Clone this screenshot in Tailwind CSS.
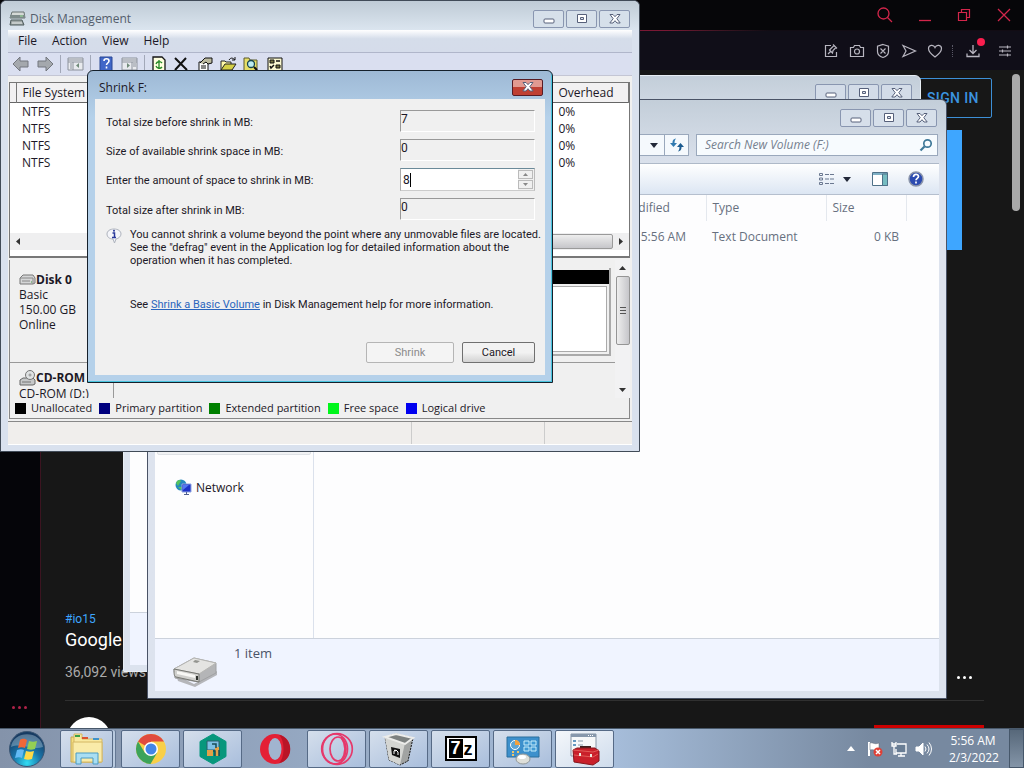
<!DOCTYPE html>
<html lang="en">
<head>
<meta charset="utf-8">
<title>Desktop</title>
<script src="https://cdn.jsdelivr.net/npm/@tailwindcss/browser@4"></script>
</head>
<body class="relative flex h-screen flex-col overflow-hidden bg-[#171717] font-['Open_Sans','Noto_Sans',sans-serif] text-xs text-[#1c1826]">
<svg class="hidden">
  <symbol id="min" viewBox="0 0 14 12"><rect x="2" y="6" width="10" height="4" rx="1" fill="#fff" stroke="#56607a"/></symbol>
  <symbol id="max" viewBox="0 0 14 12"><path d="M2.500 1.500h9v8h-9z" fill="#fff" stroke="#56607a"/><path d="M5.500 4.500h3v2h-3z" fill="#dde4ee" stroke="#56607a"/></symbol>
  <symbol id="cls" viewBox="0 0 14 12"><path d="M2 1.500h3l2 2.200 2-2.200h3L8.800 5.700l3.400 4.300H9L7 7.700 5 10H1.800l3.400-4.300z" fill="#fff" stroke="#56607a"/></symbol>
</svg>

<!-- Browser -->
<header class="flex h-[30px] shrink-0 items-center justify-end bg-[#060609] text-[#d3264b]">
  <button aria-label="Search" class="mr-6"><svg width="18" height="18" viewBox="0 0 18 18" fill="none" stroke="currentColor" stroke-width="1.300"><circle cx="7.500" cy="7.500" r="5.500"/><path d="M11.500 11.500L16 16"/></svg></button>
  <button aria-label="Minimize" class="mr-6"><svg width="14" height="18" viewBox="0 0 14 18" stroke="currentColor" stroke-width="1.300"><path d="M1 14.500h12"/></svg></button>
  <button aria-label="Restore" class="mr-6"><svg width="16" height="16" viewBox="0 0 16 16" fill="none" stroke="currentColor" stroke-width="1.200"><path d="M2.500 5.500h8v8h-8zM5.500 5.500v-3h8v8h-3"/></svg></button>
  <button aria-label="Close" class="mr-3"><svg width="16" height="16" viewBox="0 0 16 16" stroke="currentColor" stroke-width="1.300"><path d="M2 2l12 12M14 2L2 14"/></svg></button>
</header>
<div class="h-px shrink-0 bg-linear-to-r from-[#7a1834] from-65% to-[#120c14] to-75%"></div>
<div class="flex h-[39px] shrink-0 items-center justify-end gap-2 bg-[#100e18] pr-[11px] text-[#b8b6c0]">
  <button aria-label="Pin"><svg width="18" height="18" viewBox="0 0 18 18" fill="none" stroke="currentColor" stroke-width="1.200"><path d="M9 3.500H3.500v11h11V10M6 12l3-3M7.500 8l3 3 .5-2.500 3-3-2-2-3 3zM11 2.500l4 4"/></svg></button>
  <button aria-label="Snapshot"><svg width="18" height="18" viewBox="0 0 18 18" fill="none" stroke="currentColor" stroke-width="1.200"><path d="M2.500 5.500h3l1-2h5l1 2h3v9h-13z"/><circle cx="9" cy="9.500" r="2.500"/></svg></button>
  <button aria-label="Ad blocker"><svg width="18" height="18" viewBox="0 0 18 18" fill="none" stroke="currentColor" stroke-width="1.200"><path d="M9 2.500l5.500 1.800v5.200c0 3-2.500 5-5.500 6-3-1-5.500-3-5.500-6V4.300zM6.500 6.500l5 5M11.500 6.500l-5 5"/></svg></button>
  <button aria-label="Send"><svg width="18" height="18" viewBox="0 0 18 18" fill="none" stroke="currentColor" stroke-width="1.200"><path d="M3 3.500L15.500 9 3 14.500 6 9z"/></svg></button>
  <button aria-label="Favourite"><svg width="18" height="18" viewBox="0 0 18 18" fill="none" stroke="currentColor" stroke-width="1.200"><path d="M9 15C5 12 2.500 9.500 2.500 6.500c0-3.500 5-4.500 6.500-1 1.500-3.500 6.500-2.500 6.500 1C15.500 9.500 13 12 9 15z"/></svg></button>
  <span class="h-3 border-l border-dotted border-[#5a5866]"></span>
  <button aria-label="Downloads" class="relative ml-0.5"><svg width="20" height="18" viewBox="0 0 20 18" fill="none" stroke="currentColor" stroke-width="1.300"><path d="M10 3v8.500M6.500 8l3.500 3.500L13.500 8M4 11.500v3h12v-3"/></svg><span class="absolute -top-1 -right-0.5 size-2 rounded-full bg-[#fa1e4e]"></span></button>
  <button aria-label="Easy setup" class="ml-1.5"><svg width="16" height="18" viewBox="0 0 16 18" fill="none" stroke="currentColor" stroke-width="1.200"><path d="M2 5h12M2 9h12M2 13h12M10.500 3.500v3M5.500 7.500v3M10.500 11.500v3"/></svg></button>
</div>
<main class="flex min-h-0 flex-1 font-[Roboto,sans-serif]">
  <nav class="flex w-[41px] flex-col justify-end border-r border-[#3c1420] bg-[#050509] pb-[19px] pl-3">
    <button aria-label="More" class="flex gap-[3px]"><i class="size-[3px] rounded-full bg-[#b0234a]"></i><i class="size-[3px] rounded-full bg-[#b0234a]"></i><i class="size-[3px] rounded-full bg-[#b0234a]"></i></button>
  </nav>
  <div class="flex min-w-0 flex-1 flex-col overflow-hidden pl-6">
    <div class="flex h-[60px] shrink-0 justify-end pt-2 pr-5"><a href="#" class="flex h-10 w-[76px] items-center rounded-xs border border-[#3d8fd6] pl-2.5 text-sm font-medium tracking-wide text-[#3b94e0]">SIGN IN</a></div>
    <div class="mr-[50px] h-[120px] shrink-0 bg-[#3ea6ff]"></div>
    <div class="flex-1"></div>
    <section class="h-[118px] shrink-0 pr-7">
      <a href="#" class="block text-xs leading-[18px] text-[#3ea6ff]">#io15</a>
      <h1 class="text-lg leading-6 text-white">Google I/O 2015</h1>
      <div class="mt-1 flex h-11 items-center justify-between pr-3 text-sm text-[#aaa]"><span class="pb-3">36,092 views</span><button aria-label="More actions" class="flex gap-[3px] pb-0.5"><i class="size-[3px] rounded-full bg-white"></i><i class="size-[3px] rounded-full bg-white"></i><i class="size-[3px] rounded-full bg-white"></i></button></div>
      <div class="flex justify-between border-t border-[#303030] pt-4"><span class="ml-0.5 size-11 shrink-0 rounded-full bg-white"></span><strong class="ml-2 flex-1 pt-2 text-sm font-medium text-white">Google Developers</strong><button aria-label="Subscribe" class="mt-2 h-9 w-[110px] bg-[#c00]"></button></div>
    </section>
  </div>
  <div class="w-3 pt-1"><div class="h-[137px] w-2 rounded-full bg-[#a9a9a9]"></div></div>
</main>

<!-- Explorer, rear -->
<section class="absolute top-[75px] left-[123px] flex h-[597px] w-[798px] flex-col rounded-t-md border border-[#e8eef4] bg-linear-to-b from-[#c3ced9] to-[#dce3ee] to-10% p-1.5">
  <div class="flex justify-end gap-0.5 pr-0.5">
    <button aria-label="Minimize" class="mt-0.5 flex h-[18px] w-[31px] items-center justify-center rounded-xs border border-[#8996b0] bg-[#d3dce8]"><svg width="14" height="12"><use href="#min"/></svg></button>
    <button aria-label="Maximize" class="mt-0.5 flex h-[18px] w-[31px] items-center justify-center rounded-xs border border-[#8996b0] bg-[#d3dce8]"><svg width="14" height="12"><use href="#max"/></svg></button>
    <button aria-label="Close" class="mt-0.5 flex h-[18px] w-[31px] items-center justify-center rounded-xs border border-[#8996b0] bg-[#d3dce8]"><svg width="14" height="12"><use href="#cls"/></svg></button>
  </div>
  <div class="mt-2 flex-1 bg-[#fdfdfe]"></div>
  <div class="h-[53px] border-t border-[#ccd2dc] bg-[#f0f4ff]"></div>
</section>

<!-- Explorer, front -->
<section class="absolute top-[99px] left-[147px] flex h-[600px] w-[800px] flex-col rounded-t-md border border-[#4a5366] bg-linear-to-b from-[#c3ced9] to-[#dde3ee] to-12% px-[7px] pb-[7px]">
  <div class="flex justify-end gap-0.5 pt-[9px] pr-0.5">
    <button aria-label="Minimize" class="flex h-[18px] w-[31px] items-center justify-center rounded-xs border border-[#8996b0] bg-[#d6dfea]"><svg width="14" height="12"><use href="#min"/></svg></button>
    <button aria-label="Maximize" class="flex h-[18px] w-[31px] items-center justify-center rounded-xs border border-[#8996b0] bg-[#d6dfea]"><svg width="14" height="12"><use href="#max"/></svg></button>
    <button aria-label="Close" class="flex h-[18px] w-[31px] items-center justify-center rounded-xs border border-[#8996b0] bg-[#d6dfea]"><svg width="14" height="12"><use href="#cls"/></svg></button>
  </div>
  <div class="mt-[7px] flex h-[22px] gap-[7px] pr-px">
    <div class="flex flex-1 justify-end border border-[#9aa8bc] bg-[#f5f9fd]">
      <button aria-label="Previous locations" class="flex w-5 items-center justify-center"><svg width="8" height="5"><path d="M0 0h8L4 5z" fill="#222838"/></svg></button>
      <button aria-label="Refresh" class="flex w-6 items-center justify-center border-l border-[#9aa8bc]"><svg width="16" height="16" viewBox="0 0 16 16"><path d="M7 1.500C4 2 3.500 4 3.500 6H1l3.500 4L8 6H5.500c0-2 .5-3 1.500-4.500z" fill="#317ab0"/><path d="M9 14.500c3-.5 3.500-2.500 3.500-4.500H15l-3.500-4L8 10h2.500c0 2-.5 3-1.500 4.500z" fill="#1b5b90"/></svg></button>
    </div>
    <label class="flex w-[242px] items-center border border-[#9aa8bc] bg-[#f7fbfe] pr-1 pl-2">
      <input aria-label="Search New Volume (F:)" placeholder="Search New Volume (F:)" class="min-w-0 flex-1 text-xs italic outline-none placeholder:text-[#75808e]">
      <svg width="14" height="14" viewBox="0 0 14 14" fill="none" stroke="#3e7898"><circle cx="8.500" cy="5.500" r="3.700" stroke-width="1.700"/><path d="M5.500 8.500L1.500 12.500" stroke-width="2.200"/></svg>
    </label>
  </div>
  <div class="mt-[7px] flex h-8 items-center justify-end border-y border-b-[#b5bfce] border-t-[#aeb9c8] bg-linear-to-b from-white to-[#dce6f3] pr-[15px]">
    <button aria-label="View" class="mr-2"><svg width="16" height="14" viewBox="0 0 16 14" fill="none" stroke="#6b7890"><path d="M.5 1.500h3v2h-3zM.5 6h3v2h-3zM.5 10.500h3v2h-3z"/><path d="M6 2.500h10M6 7h10M6 11.500h10" stroke-dasharray="4 1"/></svg></button>
    <button aria-label="View options" class="mr-[21px]"><svg width="8" height="5"><path d="M0 0h8L4 5z" fill="#222838"/></svg></button>
    <button aria-label="Preview pane" class="mr-5"><svg width="16" height="14" viewBox="0 0 16 14"><path d="M.5.5h15v13H.5z" fill="#fff" stroke="#4e7188"/><path d="M1 1h14v2H1z" fill="#7eb0c5"/><path d="M10.500 2h5v11.500h-5z" fill="#75bcc1" stroke="#4e7188"/></svg></button>
    <button aria-label="Help"><svg width="16" height="16" viewBox="0 0 16 16"><circle cx="8" cy="8" r="7" fill="#2c4bb0" stroke="#8a94aa" stroke-width="1.500"/><path d="M5.500 6c0-3.500 5-3.500 5-.5 0 2-2.500 1.800-2.500 3.800M8 10.500v2" stroke="#fff" stroke-width="1.700" fill="none"/></svg></button>
  </div>
  <div class="flex min-h-0 flex-1 bg-[#fdfdfe]">
    <aside class="flex w-[159px] shrink-0 flex-col border-r border-[#dbe1ec]">
      <div class="flex h-[260px] items-end px-0.5"><a href="#" class="w-full rounded-xs border border-[#dfe2e6] bg-[#f1f2f4] pl-11">New Volume (F:)</a></div>
      <a href="#" class="mt-6 ml-5 flex items-center gap-1"><svg width="17" height="17" viewBox="0 0 17 17"><circle cx="6" cy="6" r="5.500" fill="#2689be"/><path d="M1 4c2-4 4-3 5-2L3 7zM3 8l4 0-1 3z" fill="#56c35c"/><path d="M7 5h9v8H7z" fill="#1e33c8" stroke="#8fa4e0"/><path d="M8 6h6l-6 5z" fill="#5377f2"/><path d="M11.500 13v2M9 15.500h5" stroke="#506090"/></svg>Network</a>
    </aside>
    <table class="h-max w-full table-fixed text-left text-[#67707f]">
      <thead><tr class="h-[26px] align-middle"><th class="border-r border-[#e4e8ee] pl-1 font-normal">Name</th><th class="w-[132px] border-r border-[#e4e8ee] pl-4 font-normal">Date modified</th><th class="w-[120px] border-r border-[#e4e8ee] pl-1.5 font-normal">Type</th><th class="w-20 border-r border-[#e4e8ee] pl-1.5 font-normal">Size</th><th class="w-[33px]"></th></tr></thead>
      <tbody><tr class="h-8"><td class="pl-1">New Text Document</td><td class="pr-5 text-right whitespace-nowrap">2/3/2022 5:56 AM</td><td class="pl-1.5">Text Document</td><td class="pr-[7px] text-right">0 KB</td><td></td></tr></tbody>
    </table>
  </div>
  <footer class="flex h-[53px] border-t border-[#ccd2dc] bg-[#f0f4ff] pl-[17px]">
    <svg class="mt-4 mr-4" width="46" height="32" viewBox="0 0 46 32"><path d="M4 20l18 9 23-13v4L23 32 6 26z" fill="#b5b6ba"/><path d="M2 14L22 3l22 5v10L27 27 3 23z" fill="#b4b5b7" stroke="#a0a1a3"/><path d="M2 14L22 3l22 5-17 11z" fill="#e4e4e2" stroke="#b6b6b3"/><path d="M2 14l25 5v8L4 22c-2-1-2-3-2-8z" fill="#d0d0cd" stroke="#777873"/><path d="M5 16l18 4v3L5 19z" fill="#f8f8f5"/><path d="M23 5l5 1-3 2-4-1z" fill="#949590"/><path d="M25 21v4" stroke="#2d302b" stroke-width="2"/></svg>
    <span class="pt-1.5 text-[13px] text-[#4b5368]">1 item</span>
  </footer>
</section>

<!-- Disk Management -->
<section class="absolute top-0 left-0 flex h-[452px] w-[640px] flex-col rounded-t-md border border-[#414b58] bg-[#d9e1ee] px-[7px] pb-[6px]">
  <div class="-mx-[7px] flex h-[29px] shrink-0 items-center rounded-t-md bg-linear-to-b from-[#bfcbd6] to-[#dbe5ef] pt-1.5 pr-[9px] pl-2 text-[#545e6c]">
    <svg width="17" height="16" viewBox="0 0 17 16"><path d="M3 1h12l1 6H1z" fill="#d5d9d7" stroke="#687373"/><path d="M1 4h15v3H1z" fill="#7e8b8b"/><path d="M2 9h11l2 5H1z" fill="#a0a8a7" stroke="#4f5c5c"/><path d="M3 12h10" stroke="#e8eceb"/><path d="M11 5h3" stroke="#9ce59a"/></svg>
    <h2 class="ml-1 flex-1">Disk Management</h2>
    <div class="flex gap-0.5">
      <button aria-label="Minimize" class="flex h-[18px] w-[31px] items-center justify-center rounded-xs border border-[#8996b0] bg-[#d6e0ea]"><svg width="14" height="12"><use href="#min"/></svg></button>
      <button aria-label="Maximize" class="flex h-[18px] w-[31px] items-center justify-center rounded-xs border border-[#8996b0] bg-[#d6e0ea]"><svg width="14" height="12"><use href="#max"/></svg></button>
      <button aria-label="Close" class="flex h-[18px] w-[31px] items-center justify-center rounded-xs border border-[#8996b0] bg-[#d6e0ea]"><svg width="14" height="12"><use href="#cls"/></svg></button>
    </div>
  </div>
  <div class="flex h-[23px] shrink-0 items-center gap-[15px] border-b border-[#b0b6ca] bg-linear-to-b from-white via-[#d5ddea] via-40% to-[#d5dcea] pl-2.5"><button>File</button><button>Action</button><button>View</button><button>Help</button></div>
  <div class="flex h-[23px] shrink-0 items-center border-b border-[#c4c6d4] bg-[#dadff0] pl-1">
    <button aria-label="Back"><svg width="18" height="16" viewBox="0 0 18 16"><path d="M1 8l7-7v4h8v6H8v4z" fill="#a4a8ad" stroke="#73777e"/></svg></button>
    <button aria-label="Forward" class="ml-1.5"><svg width="18" height="16" viewBox="0 0 18 16"><path d="M17 8l-7-7v4H2v6h8v4z" fill="#a4a8ad" stroke="#73777e"/></svg></button>
    <span class="mx-1.5 h-[18px] w-px bg-[#a2a8b8]"></span>
    <button aria-label="Show console tree"><svg width="17" height="16" viewBox="0 0 17 16"><path d="M1 2h15v12H1z" fill="#e8eaee" stroke="#8c929c"/><path d="M1 4h15M1 6h15M6 6v8M3 8h2M3 10h2M3 12h2" stroke="#8c929c"/><path d="M12 7v5L9 9.500z" fill="#6f8a78"/></svg></button>
    <span class="mx-1.5 h-[18px] w-px bg-[#a2a8b8]"></span>
    <button aria-label="Help" class="ml-0.5"><svg width="14" height="16" viewBox="0 0 14 16"><path d="M1 1h12v15H1z" fill="#4167c8" stroke="#294695"/><path d="M5 5c0-3 5-3 5 0 0 2-2.500 2-2.500 4M7.500 10.500v2" stroke="#fff" stroke-width="1.600" fill="none"/></svg></button>
    <button aria-label="Show action pane" class="ml-2"><svg width="17" height="16" viewBox="0 0 17 16"><path d="M1 2h15v12H1z" fill="#e8eaee" stroke="#8c929c"/><path d="M1 4h15M1 6h15M11 6v8M12 8h3M12 10h3" stroke="#8c929c"/><path d="M6 7v5l3-2.500z" fill="#6f8a78"/></svg></button>
    <span class="mx-1.5 h-[18px] w-px bg-[#a2a8b8]"></span>
    <button aria-label="Refresh"><svg width="16" height="16" viewBox="0 0 16 16"><path d="M2 1h9l3 3v12H2z" fill="#ffffe0" stroke="#151515" stroke-width="1.300"/><path d="M11 7a3.500 3.500 0 00-6 1M5 10a3.500 3.500 0 006 1M8 4v4M8 8v5" stroke="#238824" stroke-width="1.300" fill="none"/></svg></button>
    <button aria-label="Delete" class="ml-1.5"><svg width="16" height="16" viewBox="0 0 16 16"><path d="M2 2l12 12M13 2L2 14" stroke="#111" stroke-width="2"/></svg></button>
    <button aria-label="Properties" class="ml-2"><svg width="17" height="16" viewBox="0 0 17 16"><path d="M2 6h9v9H2z" fill="#fff" stroke="#111"/><path d="M3 7l5-5h7v5l-4 1-2-2-3 2" fill="#bdbba0" stroke="#111"/><path d="M4 10h5M4 12h5" stroke="#111"/></svg></button>
    <button aria-label="Open" class="ml-1.5"><svg width="17" height="16" viewBox="0 0 17 16"><path d="M1 14V5h4l1 1h5v3" fill="#fff9aa" stroke="#222"/><path d="M1 14l4-6h11l-4 6z" fill="#d4cf47" stroke="#222"/><path d="M9 4c2-3 4-2 6 0m0-3v3h-3" fill="none" stroke="#111"/></svg></button>
    <button aria-label="Explore" class="ml-1.5"><svg width="16" height="16" viewBox="0 0 16 16"><path d="M1 2h5l1 2h7v11H1z" fill="#e7df66" stroke="#5b592d"/><circle cx="8" cy="8" r="3.500" fill="#bcecf1" stroke="#17454c" stroke-width="1.300"/><path d="M11 11l3 3" stroke="#111" stroke-width="2"/></svg></button>
    <button aria-label="Settings" class="ml-2"><svg width="16" height="16" viewBox="0 0 16 16"><path d="M1 2h14v13H1z" fill="#faf8d0" stroke="#111"/><path d="M3 4h4v3H3zM9 9h4v3H9z" fill="#747443" stroke="#111"/><path d="M9 5h4M3 10l1 2 3-3" fill="none" stroke="#111" stroke-width="1.500"/></svg></button>
  </div>
  <div class="flex min-h-0 flex-1 flex-col border-b border-[#888] bg-[#f0f0f0] pt-1.5 pr-0.5 pl-px">
    <div class="flex h-[176px] shrink-0 flex-col border-x border-t border-b-2 border-[#777] bg-white">
      <table class="w-full table-fixed text-left leading-[17px]">
        <thead><tr class="h-[19px] border-b border-[#666] bg-[#f2f1f2]"><th class="w-1.5 border-r border-[#777]"></th><th class="pl-1.5 font-normal">File System</th><th class="w-[76px] border-r border-[#777] pl-1.5 font-normal">Overhead</th></tr></thead>
        <tbody><tr><td></td><td class="pl-1.5">NTFS</td><td class="pl-1.5">0%</td></tr><tr><td></td><td class="pl-1.5">NTFS</td><td class="pl-1.5">0%</td></tr><tr><td></td><td class="pl-1.5">NTFS</td><td class="pl-1.5">0%</td></tr><tr><td></td><td class="pl-1.5">NTFS</td><td class="pl-1.5">0%</td></tr></tbody>
      </table>
      <div class="mt-auto mb-1.5 flex h-[17px] items-center bg-[#efeff0] px-1.5">
        <svg width="4" height="7"><path d="M4 0v7L0 3.500z" fill="#333"/></svg>
        <div class="mr-1.5 ml-40 h-[15px] flex-1 rounded-xs border border-[#9a9a9a] bg-linear-to-b from-[#eee] to-[#c6c6ca]"></div>
        <svg width="4" height="7"><path d="M0 0v7l4-3.500z" fill="#333"/></svg>
      </div>
    </div>
    <div class="mt-0.5 flex min-h-0 flex-1 border-l border-[#888]">
      <div class="flex min-w-0 flex-1 flex-col">
        <div class="flex h-[103px] shrink-0 border-b border-[#999] leading-[15px]">
          <div class="w-[103px] shrink-0 pt-3 pl-[9px]"><b class="flex items-center"><svg width="17" height="12" viewBox="0 0 17 12"><path d="M1 4l3-3h10l2 3v5l-2 1H1z" fill="#d5d6d7" stroke="#777"/><path d="M1 4h13v6M3 7h8" fill="none" stroke="#888"/><path d="M12 8h1" stroke="#43a343"/></svg>Disk 0</b>Basic<br>150.00 GB<br>Online</div>
          <div class="mt-2 mr-1 mb-1.5 flex flex-1 flex-col border-r-2 border-b-2 border-[#aaa]"><div class="mt-0.5 h-3.5 bg-black"></div><div class="mt-0.5 mr-0.5 mb-0.5 flex-1 border border-[#aaa] bg-white"></div></div>
        </div>
        <div class="flex min-h-0 flex-1 overflow-hidden pt-1.5 leading-[15px]">
          <div class="w-[104px] shrink-0 border-r border-[#999] pl-[9px] whitespace-nowrap"><b class="flex h-[17px] items-center"><svg class="shrink-0" width="17" height="16" viewBox="0 0 17 16"><path d="M1 10l3-2h10l2 2v4l-2 1H1z" fill="#c5c7c8" stroke="#666"/><circle cx="11" cy="5" r="4.500" fill="#dfe2e3" stroke="#777"/><circle cx="11" cy="5" r="1" fill="#fff" stroke="#888"/><path d="M3 12h9" stroke="#777"/></svg>CD-ROM 0</b>CD-ROM (D:)</div>
        </div>
      </div>
      <div class="flex w-[15px] flex-col items-center bg-[#f2f2f3] pt-1.5 pb-1.5">
        <svg width="7" height="4"><path d="M0 4h7L3.500 0z" fill="#333"/></svg>
        <div class="mt-1.5 flex h-[69px] w-3.5 flex-col items-center justify-center gap-0.5 rounded-xs border border-[#959595] bg-linear-to-r from-[#eee] to-[#c6c6ca]"><i class="h-px w-1.5 bg-[#555]"></i><i class="h-px w-1.5 bg-[#555]"></i><i class="h-px w-1.5 bg-[#555]"></i></div>
        <svg class="mt-auto" width="7" height="4"><path d="M0 0h7L3.500 4z" fill="#333"/></svg>
      </div>
    </div>
    <div class="flex h-[21px] shrink-0 items-center gap-[5px] border-x border-b border-[#888] pt-px pl-[5px] text-[11px]">
      <i class="size-[11px] bg-black"></i><span class="mr-0.5">Unallocated</span>
      <i class="size-[11px] bg-[#00007e]"></i><span class="mr-0.5">Primary partition</span>
      <i class="size-[11px] bg-[#008000]"></i><span class="mr-0.5">Extended partition</span>
      <i class="size-[11px] bg-[#00f61b]"></i><span class="mr-0.5">Free space</span>
      <i class="size-[11px] bg-[#0000f0]"></i><span>Logical drive</span>
    </div>
    <div class="h-0.5 shrink-0"></div>
  </div>
  <div class="flex h-[23px] shrink-0 border-b border-white bg-[#f0eeec]"><span class="flex-1 border-r border-[#ccc]"></span><span class="w-[133px] border-r border-[#ccc]"></span><span class="w-[87px]"></span></div>
</section>

<!-- Shrink dialog -->
<section role="dialog" aria-labelledby="dlg" class="absolute top-[70px] left-[87px] flex h-[313px] w-[466px] flex-col rounded-t-md border border-[#15202b] bg-linear-to-b from-[#9eb9d5] to-[#b5d1ea] to-15% px-[7px] pb-[7px] shadow-[inset_-1px_-1px_0_#48c4de]">
  <div class="flex h-7 shrink-0 items-center justify-between pt-1"><h2 id="dlg" class="pt-0.5 pl-1">Shrink F:</h2>
    <button aria-label="Close" class="mr-0.5 flex h-[17px] w-[31px] items-center justify-center rounded-xs border border-[#581c25] bg-linear-to-b from-[#e19a91] from-45% to-[#bf4033] to-50%"><svg width="14" height="12"><use href="#cls"/></svg></button></div>
  <form class="flex flex-1 flex-col bg-[#f0f0f0] pt-[11px] pr-[10px] pl-[11px] font-[Roboto,'Liberation_Sans',sans-serif] text-[11px] leading-[13px]">
    <div class="grid grid-cols-[1fr_135px] gap-y-[7px]">
      <label for="a" class="pt-[6px]">Total size before shrink in MB:</label><input id="a" value="7" readonly class="h-[22px] border border-t-[#999] border-r-white border-b-white border-l-[#999] pb-1 text-xs">
      <label for="b" class="pt-[6px]">Size of available shrink space in MB:</label><input id="b" value="0" readonly class="h-[22px] border border-t-[#999] border-r-white border-b-white border-l-[#999] pb-1 text-xs">
      <label for="c" class="pt-[6px]">Enter the amount of space to shrink in MB:</label>
      <div class="flex h-[23px] border border-t-[#6b8a99] border-r-[#bbb] border-b-[#ccc] border-l-[#aaa] bg-white"><div class="flex min-w-0 flex-1 items-center pl-0.5"><input id="c" value="8" class="w-[7px] text-xs outline-none"><i class="h-3.5 w-px bg-black"></i></div>
        <div class="flex w-4 flex-col justify-between bg-[#f0f0f0] py-px pr-px"><button type="button" aria-label="Increase" class="flex h-[9px] items-center justify-center border border-[#bbb]"><svg width="5" height="3"><path d="M0 3h5L2.500 0z" fill="#888"/></svg></button><button type="button" aria-label="Decrease" class="flex h-[9px] items-center justify-center border border-[#bbb]"><svg width="5" height="3"><path d="M0 0h5L2.500 3z" fill="#888"/></svg></button></div></div>
      <label for="d" class="pt-[6px]">Total size after shrink in MB:</label><input id="d" value="0" readonly class="h-[22px] border border-t-[#999] border-r-white border-b-white border-l-[#999] pb-1 text-xs">
    </div>
    <div class="mt-2 flex"><svg class="mr-2 shrink-0" width="16" height="16" viewBox="0 0 16 16"><path d="M8 1c4 0 7 2 7 5 0 2.500-2.500 4.500-5 5l-1.500 4L7 11C3.500 11 1 9 1 6s3-5 7-5z" fill="#f4f5fa" stroke="#aeb3bd"/><path d="M6.500 5h2v4M6 9.500h4" fill="none" stroke="#29399b" stroke-width="1.500"/><circle cx="8" cy="2.800" r="1" fill="#29399b"/></svg>
      <p class="whitespace-nowrap">You cannot shrink a volume beyond the point where any unmovable files are located.<br>See the "defrag" event in the Application log for detailed information about the<br>operation when it has completed.</p></div>
    <p class="mt-[31px] pl-6">See <a href="#" class="text-[#2a65bd] underline">Shrink a Basic Volume</a> in Disk Management help for more information.</p>
    <div class="mt-auto mb-3 flex justify-end gap-2"><button type="button" disabled class="h-[21px] w-[88px] rounded-xs border border-[#b5b5b5] bg-[#f4f4f4] text-[#8b8b8b]">Shrink</button><button type="button" class="h-[21px] w-[73px] rounded-xs border border-[#707070] bg-linear-to-b from-[#f2f2f2] from-50% to-[#d3d3d3]">Cancel</button></div>
  </form>
</section>

<!-- Taskbar -->
<footer class="flex h-10 shrink-0 items-center border-t border-[#49596b] bg-linear-to-r from-[#8493aa] via-[#a6bdda] via-60% to-[#7789a0] to-85%">
  <button aria-label="Start" class="mr-3.5 ml-2"><svg width="38" height="38" viewBox="0 0 38 38"><defs><radialGradient id="orb" cx=".5" cy=".9" r=".8"><stop stop-color="#31dcf3"/><stop offset=".5" stop-color="#1974a8"/><stop offset="1" stop-color="#163b63"/></radialGradient></defs><circle cx="19" cy="19" r="17.500" fill="url(#orb)" stroke="#3a5573"/><path d="M3 17C5 0 33 0 35 17 24 21 14 12 3 17z" fill="#b9d3e2" opacity=".4"/><path d="M12 10c3-2 5-1 7 0l-2 8c-2-1-5-1-7 0z" fill="#ef6738"/><path d="M21 11c3 1 5 1 8 0l-2 8c-3 1-5 1-8 0z" fill="#94cf54"/><path d="M9 20c3-1 5-1 7 0l-2 8c-2-1-4-1-7 0z" fill="#62baf4"/><path d="M18 21c3 1 5 1 8 0l-2 8c-3 1-5 1-8 0z" fill="#ffda47"/></svg></button>
  <button aria-label="Explorer" class="mr-1 flex h-[38px] w-[53px] items-center justify-center rounded-xs border border-[#566a86] bg-linear-to-br from-[#d5dfec] to-[#acc0dc] shadow-[2px_0_0_#b9cadf,3px_0_0_#647894]"><svg width="36" height="34" viewBox="0 0 36 34"><path d="M2 5h6l2 3h20l2 3v19H2z" fill="#f3dd80" stroke="#c6a950"/><path d="M5 2h8v5h20v23H5z" fill="#f8e9a0" stroke="#d4b764"/><path d="M4 10h29v20H4z" fill="#f9eba9" stroke="#d4b764"/><path d="M6 3h5v2H6z" fill="#39a149"/><path d="M13 5h6v2h-6z" fill="#db5430"/><path d="M24 6h6v2h-6z" fill="#4093ca"/><path d="M7 32V21h22v11h-5v-6H12v6z" fill="#a9def3" stroke="#4a9bc4"/></svg></button>
  <div class="ml-1 flex gap-[3px]">
    <button aria-label="Chrome" class="flex h-[38px] w-[59px] items-center justify-center rounded-xs border border-[#566a86] bg-linear-to-br from-[#d5dfec] to-[#a9bedc]"><svg width="32" height="32" viewBox="0 0 32 32"><circle cx="16" cy="16" r="15" fill="#f8cf48"/><path d="M16 16L3 8.500A15 15 0 0129 8.500H16z" fill="#e04b3e"/><path d="M3 8.500A15 15 0 0015.500 31L22 20H10z" fill="#3ca35a"/><circle cx="16" cy="16" r="7" fill="#fff"/><circle cx="16" cy="16" r="5.500" fill="#4285e8"/></svg></button>
    <button aria-label="Green hexagon app" class="flex h-[38px] w-[59px] items-center justify-center rounded-xs border border-[#566a86] bg-linear-to-br from-[#d5dfec] to-[#a9bedc]"><svg width="32" height="32" viewBox="0 0 32 32"><path d="M16 1l13 7.500v15L16 31 3 23.500v-15z" fill="#07977c" stroke="#07977c"/><path d="M10 8h12v9H10z" fill="#7ec0e3" stroke="#2c5c6a"/><path d="M10 17h6v6h-6zM18 14h4v9h-4z" fill="#e3a148"/><path d="M16 18h2v5M22 17v6M15 11h4v4" stroke="#174c57" fill="none" stroke-width="1.500"/></svg></button>
    <button aria-label="Opera" class="flex h-[38px] w-[59px] items-center justify-center"><svg width="32" height="32" viewBox="0 0 32 32"><ellipse cx="16" cy="16" rx="15" ry="15" fill="#e41f35"/><path d="M20 2c15 2 15 26 0 28 6-5 6-23 0-28z" fill="#b91527"/><ellipse cx="16" cy="16" rx="6.500" ry="11" fill="#a1b4cf"/></svg></button>
    <button aria-label="Opera GX" class="flex h-[38px] w-[59px] items-center justify-center rounded-xs border border-[#566a86] bg-linear-to-br from-[#d5dfec] to-[#a9bedc]"><svg width="34" height="34" viewBox="0 0 34 34" fill="none" stroke="#e6396b" stroke-width="1.700"><circle cx="17" cy="17" r="15.300"/><ellipse cx="15" cy="17" rx="12.500" ry="15"/><ellipse cx="18" cy="17" rx="8" ry="12"/><path d="M21 5q8 12 0 24"/></svg></button>
    <button aria-label="Uninstaller" class="flex h-[38px] w-[59px] items-center justify-center rounded-xs border border-[#566a86] bg-linear-to-br from-[#d5dfec] to-[#a9bedc]"><svg width="34" height="34" viewBox="0 0 34 34"><path d="M3 5l11-3 17 4-5 23-8 4-11-5z" fill="#a1a3a2" stroke="#151515" stroke-dasharray="2 1"/><path d="M23 11l-5 22-11-5L3 6z" fill="#d4d5d2"/><path d="M3 5l11-3 17 4-8 6z" fill="#7d8180" stroke="#ececea" stroke-width="2"/><path d="M9 15l9 2v9l-8-3z" fill="#111"/><path d="M12 22v-3l2-1 2 2v3m-4-5l2 1" stroke="#fff" fill="none"/></svg></button>
    <button aria-label="7-Zip" class="flex h-[38px] w-[59px] items-center justify-center rounded-xs border border-[#566a86] bg-linear-to-br from-[#d5dfec] to-[#a9bedc]"><span class="flex h-[25px] w-8 items-center border-2 border-black bg-white font-['Liberation_Sans',sans-serif] text-lg leading-5 font-bold text-black"><span class="ml-0.5 h-[19px] w-3.5 bg-black text-center leading-[19px] text-white">7</span><span class="pl-px">z</span></span></button>
    <button aria-label="Control Panel" class="flex h-[38px] w-[59px] items-center justify-center rounded-xs border border-[#566a86] bg-linear-to-br from-[#d5dfec] to-[#a9bedc]"><svg width="34" height="32" viewBox="0 0 34 32"><path d="M1 4h32v20H1z" fill="#3d90cc" stroke="#2b6e9d"/><circle cx="9" cy="12" r="4.500" fill="#5da5d4" stroke="#fff"/><path d="M9 12V7c3 0 5 2 5 5z" fill="#f2a13d"/><path d="M18 8h5v4h-5zM25 8h5v4h-5zM18 14h5v4h-5zM25 14h5v4h-5z" fill="#419ad4" stroke="#c7edfb"/><path d="M6 19h2M11 19h2M6 22h2" stroke="#eec56a" stroke-width="2"/><ellipse cx="17" cy="26" rx="7" ry="5" fill="#dedfd9" stroke="#929898"/><ellipse cx="16" cy="24" rx="4" ry="2" fill="#fff"/></svg></button>
    <button aria-label="Disk Management" class="flex h-[38px] w-[59px] items-center justify-center rounded-xs border border-[#566a86] bg-linear-to-br from-[#f4f7fb] to-[#cfdcec]"><svg width="34" height="34" viewBox="0 0 34 34"><path d="M3 2h25v22H3z" fill="#f6f8f9" stroke="#8795a4"/><path d="M3 2h25v3H3z" fill="#8798ac"/><path d="M20 3.500h6" stroke="#fff" stroke-dasharray="1 1"/><path d="M5 8h3v2H5zM5 12h3v2H5z" fill="#6599c1"/><path d="M10 9h5M10 13h5" stroke="#8799aa"/><path d="M13 18v-3h9v3" fill="none" stroke="#3c2221" stroke-width="2"/><path d="M5 18l4-2h18l4 3v10l-6 4L6 30z" fill="#c9202a" stroke="#84171c"/><path d="M5 18l20 2 6-2M6 23l19 2 5-3" stroke="#e25c58" fill="none"/><path d="M12 21v3M23 22v3" stroke="#ececdf" stroke-width="2"/></svg></button>
  </div>
  <div class="ml-auto flex h-full items-center gap-2 text-white">
    <button aria-label="Show hidden icons" class="mr-1"><svg width="8" height="5"><path d="M0 5h8L4 0z" fill="#fff"/></svg></button>
    <svg width="16" height="16" viewBox="0 0 16 16"><path d="M2 1v14" stroke="#fff" stroke-width="2"/><path d="M3 2c3-1 4 2 9 0v7c-4 1-6-1-9 0z" fill="#fff" stroke="#5c6675" stroke-width=".5"/><circle cx="11" cy="11" r="4.500" fill="#df4036"/><path d="M9 9l4 4M13 9l-4 4" stroke="#fff" stroke-width="1.500"/></svg>
    <svg width="16" height="16" viewBox="0 0 16 16" fill="none" stroke="#fff"><path d="M6 3h9v9H5V8" fill="#697d94" stroke-width="1.300"/><path d="M1 1v4h4V1M3 5v8h3M7 15h7M10 12v3M1.500 3h3" stroke-width="1.300"/></svg>
    <svg width="18" height="16" viewBox="0 0 18 16" fill="none" stroke="#fff"><path d="M1 6h3l4-4v12l-4-4H1z" fill="#fff"/><path d="M10 5.500q2 2.500 0 5M12 3.500q4 4.500 0 9M14 1.500q5 6.500 0 13"/></svg>
    <time class="ml-2 w-12 text-center leading-[17px] whitespace-nowrap">5:56 AM<br>2/3/2022</time>
    <button aria-label="Show desktop" class="ml-1 h-full w-[15px] border border-[#46576a] bg-linear-to-b from-[#57687a] to-[#8495a8]"></button>
  </div>
</footer>
</body>
</html>
